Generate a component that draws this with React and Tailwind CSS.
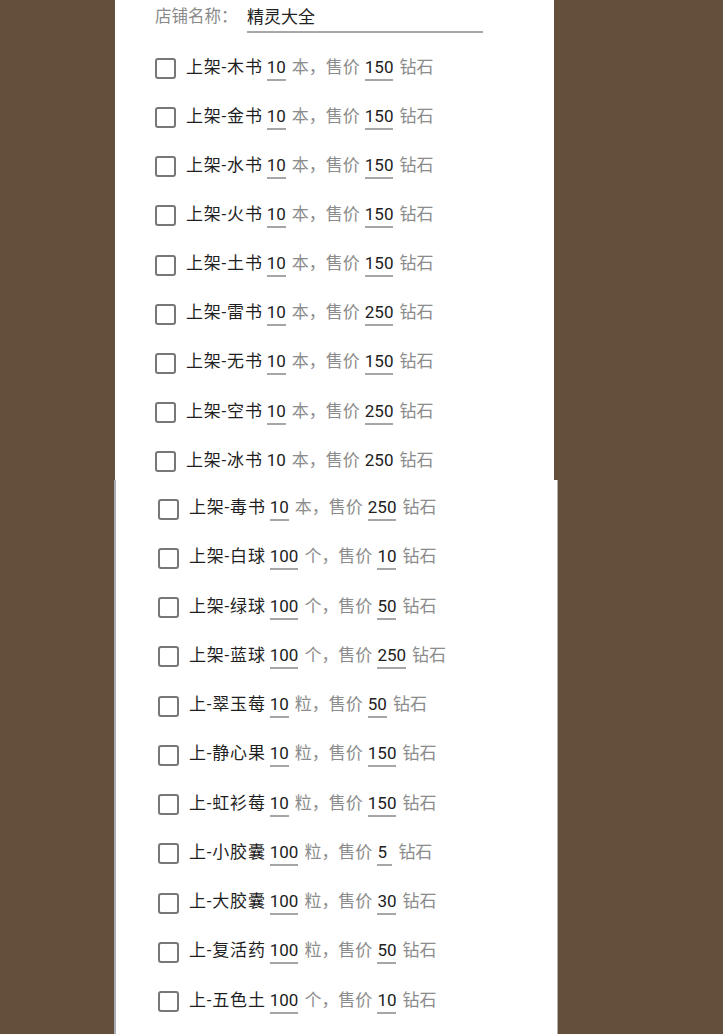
import React from 'react';

const topRows = [
  { name: '上架-木书', qty: '10', unit: '本', price: '150' },
  { name: '上架-金书', qty: '10', unit: '本', price: '150' },
  { name: '上架-水书', qty: '10', unit: '本', price: '150' },
  { name: '上架-火书', qty: '10', unit: '本', price: '150' },
  { name: '上架-土书', qty: '10', unit: '本', price: '150' },
  { name: '上架-雷书', qty: '10', unit: '本', price: '250' },
  { name: '上架-无书', qty: '10', unit: '本', price: '150' },
  { name: '上架-空书', qty: '10', unit: '本', price: '250' },
  { name: '上架-冰书', qty: '10', unit: '本', price: '250', plain: true },
];

const bottomRows = [
  { name: '上架-毒书', qty: '10', unit: '本', price: '250' },
  { name: '上架-白球', qty: '100', unit: '个', price: '10' },
  { name: '上架-绿球', qty: '100', unit: '个', price: '50' },
  { name: '上架-蓝球', qty: '100', unit: '个', price: '250' },
  { name: '上-翠玉莓', qty: '10', unit: '粒', price: '50' },
  { name: '上-静心果', qty: '10', unit: '粒', price: '150' },
  { name: '上-虹衫莓', qty: '10', unit: '粒', price: '150' },
  { name: '上-小胶囊', qty: '100', unit: '粒', price: '5' },
  { name: '上-大胶囊', qty: '100', unit: '粒', price: '30' },
  { name: '上-复活药', qty: '100', unit: '粒', price: '50' },
  { name: '上-五色土', qty: '100', unit: '个', price: '10' },
];

function NumField({ value, plain }) {
  return (
    <span
      className={`inline-block min-w-[15px] leading-[20px] pb-[2px] text-[#212121] border-b-2 ${plain ? 'border-transparent' : 'border-[#a6a6a6]'}`}
    >
      {value}
    </span>
  );
}

function ShelfRow({ row, height }) {
  return (
    <div className={`flex items-center ${height}`}>
      <span className="w-[21px] h-[21px] border-2 border-[#777777] rounded-[3px] shrink-0" />
      <div className="flex items-baseline ml-[10px] text-[17px] leading-[20px] whitespace-nowrap">
        <span className="text-[#1f1f1f] tracking-[0.8px]">{row.name}</span>
        <span className="ml-[4px] mr-[6px]">
          <NumField value={row.qty} plain={row.plain} />
        </span>
        <span className="text-[#8c8c8c]">{row.unit}，售价</span>
        <span className="ml-[5px] mr-[6px]">
          <NumField value={row.price} plain={row.plain} />
        </span>
        <span className="text-[#8c8c8c]">钻石</span>
      </div>
    </div>
  );
}

export default function App() {
  return (
    <div
      className="w-[723px] h-[1034px] bg-[#644f3c] overflow-hidden"
      style={{ fontFamily: 'Roboto, "Noto Sans CJK SC", sans-serif' }}
    >
      {/* upper capture */}
      <div className="ml-[115px] w-[439px] h-[480px] bg-white overflow-hidden">
        <div className="flex items-start h-[44px] pt-[5px] pl-[40px]">
          <span className="text-[16.5px] leading-[24px] text-[#8a8a8a]">店铺名称：</span>
          <div className="ml-[9.5px] w-[236px] h-[28px] border-b-2 border-[#a8a8a8] text-[17px] leading-[24px] text-[#212121]">
            精灵大全
          </div>
        </div>
        {topRows.map((r) => (
          <div key={r.name} className="pl-[40px]">
            <ShelfRow row={r} height="h-[49.15px]" />
          </div>
        ))}
      </div>

      {/* lower capture */}
      <div className="ml-[114px] w-[444px] h-[554px] bg-white border-l-2 border-r border-l-[#a9adb3] border-r-[#b0b0b0] pt-[4.5px] pl-[42px]">
        {bottomRows.map((r) => (
          <ShelfRow key={r.name} row={r} height="h-[49.25px]" />
        ))}
      </div>
    </div>
  );
}
